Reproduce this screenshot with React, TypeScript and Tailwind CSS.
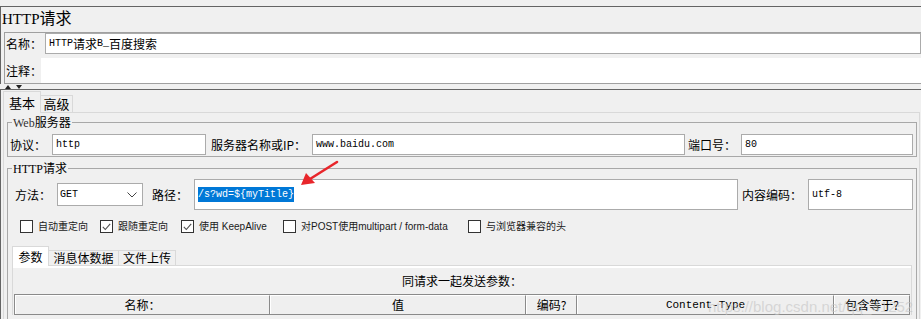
import React from 'react';

const mono = "font-['Liberation_Mono','Noto_Sans_CJK_SC',monospace] text-[10px]";

const Field: React.FC<{ className?: string; children?: React.ReactNode }> = ({ className = '', children }) => (
  <div className={`flex items-center bg-white border border-[#ababab] px-[3px] ${className}`}>{children}</div>
);

const Check: React.FC<{ checked?: boolean; label: string; className?: string }> = ({ checked, label, className = '' }) => (
  <div className={`flex items-center gap-[5px] ${className}`}>
    <div className="w-[13px] h-[13px] bg-white border border-[#333333] flex items-center justify-center">
      {checked && (
        <svg width="9" height="8" viewBox="0 0 9 8">
          <polyline points="0.8,3.8 3.3,6.5 8.2,0.8" fill="none" stroke="#4d4d4d" strokeWidth="1.1" />
        </svg>
      )}
    </div>
    <span className="font-['Liberation_Sans','Noto_Sans_CJK_SC',sans-serif] text-[10px] leading-[13px] text-[#1a1a1a] whitespace-nowrap">{label}</span>
  </div>
);

const HeadCell: React.FC<{ className?: string; children?: React.ReactNode }> = ({ className = '', children }) => (
  <div className={`h-full flex items-center justify-center bg-[#efefef] border-l border-t border-white border-r border-r-[#8a8a8a] whitespace-nowrap ${className}`}>{children}</div>
);

export default function App() {
  return (
    <div className="relative w-[921px] h-[319px] overflow-hidden bg-[#f0f0f0] pt-[6px] font-['Noto_Sans_CJK_SC',sans-serif] text-[12px] text-black">
      {/* top: title, name, comment */}
      <div className="border-t border-l border-[#646464]">
        <div className="h-[25px] pt-[1px] pl-[1px] text-[16px] leading-[19px]">
          <span className="font-['Liberation_Serif',serif] text-[15px]">HTTP</span>请求
        </div>
        <div className="ml-[3px] h-[52px] border border-r-0 border-[#a0a0a0] flex flex-col">
          <div className="flex h-[21px]">
            <div className="w-[40px] pl-[1px] leading-[21px] whitespace-nowrap">名称：</div>
            <Field className="flex-1 h-[21px]">
              <span className={mono}>HTTP</span>
              <span>请求</span>
              <span className={mono}>B_</span>
              <span>百度搜索</span>
            </Field>
          </div>
          <div className="flex h-[25px] mt-[4px]">
            <div className="w-[36px] pl-[1px] leading-[25px] whitespace-nowrap">注释：</div>
            <div className="flex-1 bg-white" />
          </div>
        </div>
      </div>

      {/* splitter */}
      <div className="h-[5px] pl-[5px] flex items-center">
        <svg width="18" height="4" viewBox="0 0 18 4">
          <polygon points="0,4 3,0 6,4" fill="#222" />
          <polygon points="11,0 17,0 14,4" fill="#222" />
        </svg>
      </div>

      {/* lower: tabs */}
      <div className="border-t border-l border-[#646464]">
        <div className="flex items-end h-[22px] pl-[2px]">
          <div className="relative z-10 -mb-px w-[38px] h-[22px] bg-[#f0f0f0] border border-b-0 border-[#d9d9d9] flex items-center justify-center text-[13px] leading-[16px]">基本</div>
          <div className="w-[32px] h-[17px] border border-l-0 border-b-0 border-[#d9d9d9] flex items-center justify-center text-[13px] leading-[16px]">高级</div>
        </div>

        <div className="ml-[2px] w-[917px] h-[220px] border border-[#d9d9d9]">
          {/* Web服务器 */}
          <fieldset className="mt-[2px] ml-[3px] mr-[2px] border border-[#a8a8a8] pt-[4px] pb-[1px] pl-0 pr-[3px]">
            <legend className="ml-[4px] px-[1px] leading-[14px]">
              <span className="font-['Liberation_Serif',serif] text-[12px] text-[#333]">Web</span>服务器
            </legend>
            <div className="flex items-center h-[21px] whitespace-nowrap">
              <div className="w-[44px] pl-[2px]">协议：</div>
              <Field className="w-[154px] h-[21px]"><span className={mono}>http</span></Field>
              <div className="w-[106px] pl-[5px]">服务器名称或IP：</div>
              <Field className="flex-1 h-[21px]"><span className={mono}>www.baidu.com</span></Field>
              <div className="w-[56px] pl-[3px]">端口号：</div>
              <Field className="w-[172px] h-[21px]"><span className={mono}>80</span></Field>
            </div>
          </fieldset>

          {/* HTTP请求 */}
          <fieldset className="mt-[4px] ml-[3px] mr-[2px] h-[200px] border border-[#a8a8a8] pt-[3px] pr-[3px]">
            <legend className="ml-[4px] px-[1px] leading-[14px]">
              <span className="font-['Liberation_Serif',serif] text-[12px]">HTTP</span>请求
            </legend>
            <div className="flex items-center h-[31px] whitespace-nowrap">
              <div className="w-[49px] pl-[7px]">方法：</div>
              <div className="w-[86px] h-[23px] bg-white border border-[#ababab] flex items-center justify-between pl-[2px] pr-[5px]">
                <span className={mono}>GET</span>
                <svg width="10" height="6" viewBox="0 0 10 6">
                  <polyline points="0.5,0.5 5,5 9.5,0.5" fill="none" stroke="#444" strokeWidth="1" />
                </svg>
              </div>
              <div className="w-[51px] pl-[9px]">路径：</div>
              <Field className="flex-1 h-[31px]">
                <span className={`${mono} bg-[#0078d7] text-white leading-[15px]`}>/s?wd=${'{'}myTitle{'}'}</span>
              </Field>
              <div className="w-[70px] pl-[4px]">内容编码：</div>
              <Field className="w-[105px] h-[31px]"><span className={mono}>utf-8</span></Field>
            </div>

            <div className="flex items-center h-[13px] mt-[10px] pl-[12px]">
              <Check label="自动重定向" className="w-[80px]" />
              <Check checked label="跟随重定向" className="w-[81px]" />
              <Check checked label="使用 KeepAlive" className="w-[102px]" />
              <Check label="对POST使用multipart / form-data" className="w-[185px]" />
              <Check label="与浏览器兼容的头" />
            </div>

            {/* inner tabs */}
            <div className="flex items-end h-[19px] mt-[13px] pl-[4px] whitespace-nowrap">
              <div className="relative z-10 -mb-px w-[37px] h-[20px] bg-white border border-b-0 border-[#d9d9d9] flex items-center justify-center">参数</div>
              <div className="w-[70px] h-[15px] border border-l-0 border-b-0 border-[#d9d9d9] flex items-center justify-center leading-[14px]">消息体数据</div>
              <div className="w-[57px] h-[15px] border border-l-0 border-b-0 border-[#d9d9d9] flex items-center justify-center leading-[14px]">文件上传</div>
            </div>
            <div className="ml-[4px] w-[900px] border-t border-l border-r border-[#d9d9d9]">
              <div className="h-[2px] bg-white" />
              <div className="h-[26px] flex items-center justify-center">同请求一起发送参数：</div>
              <div className="ml-px w-[896px] h-[21px] flex border-t border-l border-b border-[#8a8a8a]">
                <HeadCell className="w-[255px]">名称：</HeadCell>
                <HeadCell className="w-[256px]">值</HeadCell>
                <HeadCell className="w-[51px]">编码?</HeadCell>
                <HeadCell className="w-[257px]"><span className={`${mono} text-[11px]`}>Content-Type</span></HeadCell>
                <HeadCell className="flex-1">包含等于?</HeadCell>
              </div>
            </div>
          </fieldset>
        </div>
      </div>

      {/* annotation arrow */}
      <svg className="absolute left-[296px] top-[158px]" width="46" height="32" viewBox="0 0 46 32">
        <line x1="41" y1="4" x2="14" y2="21" stroke="#e8262b" strokeWidth="2.6" strokeLinecap="round" />
        <polygon points="5,27 10,15 19,25" fill="#e8262b" />
      </svg>

      {/* watermark */}
      <div className="absolute left-[708px] top-[296px] font-['Liberation_Sans',sans-serif] text-[15px] text-[#c4c4c4]/60 whitespace-nowrap pointer-events-none">
        https://blog.csdn.net/qq_41252
      </div>
    </div>
  );
}
